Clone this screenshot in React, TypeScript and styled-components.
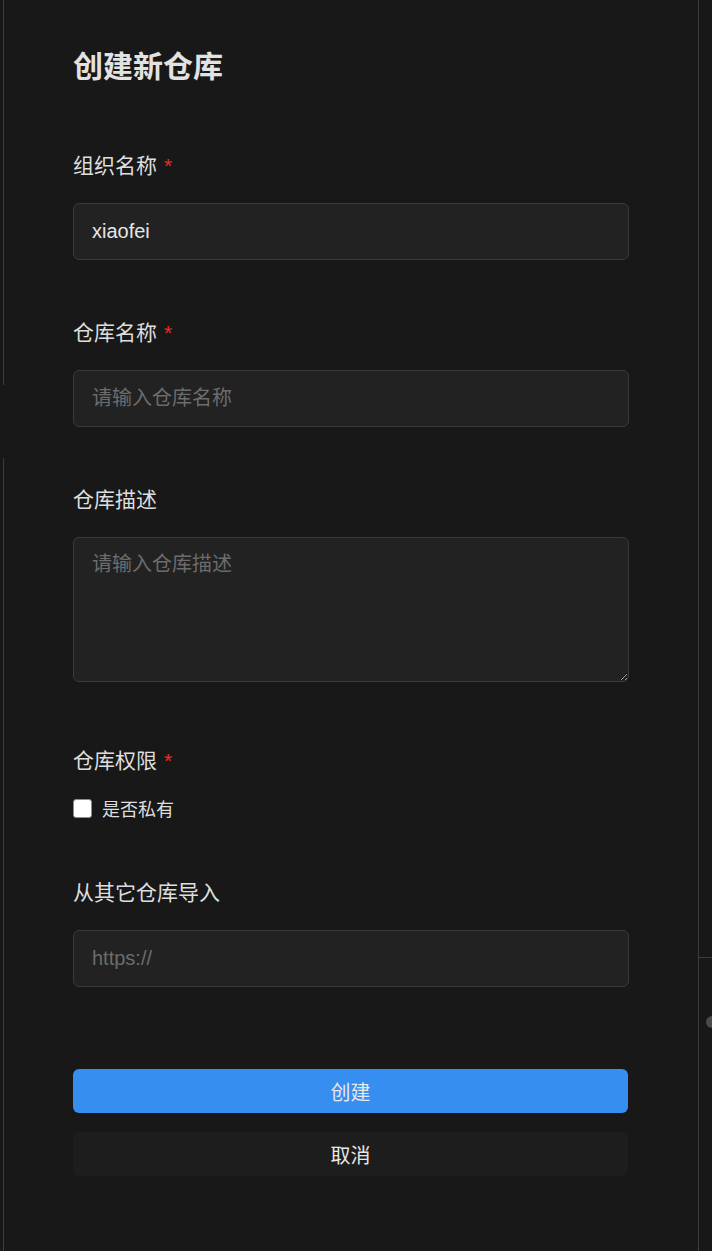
import styled, { createGlobalStyle } from 'styled-components';

const GlobalStyle = createGlobalStyle`
  html, body {
    margin: 0;
    background: #181818;
  }
  * {
    box-sizing: border-box;
  }
`;

const Shell = styled.div`
  position: relative;
  display: flex;
  min-height: 1251px;
  font-family: 'Liberation Sans', 'Noto Sans CJK SC', sans-serif;
  color: #dedede;
`;

const LeftGutter = styled.div`
  width: 3px;
  flex-shrink: 0;
`;

const GutterGap = styled.div`
  position: absolute;
  left: 0;
  top: 385px;
  width: 8px;
  height: 73px;
  background: #181818;
`;

const Panel = styled.main`
  width: 696px;
  flex-shrink: 0;
  border-left: 1px solid #3c3c3c;
  border-right: 1px solid #3c3c3c;
  padding: 47px 0 0 69px;
`;

const RightRail = styled.aside`
  flex: 1;
  min-width: 0;
  overflow: hidden;
  display: flex;
  flex-direction: column;
`;

const RailTop = styled.div`
  height: 958px;
  border-bottom: 1px solid #3c3c3c;
`;

const RailKnob = styled.div`
  width: 12px;
  height: 12px;
  flex-shrink: 0;
  margin: 58px 0 0 7px;
  border-radius: 50%;
  background: #4a4a4a;
`;

const Form = styled.form`
  width: 556px;
  display: flex;
  flex-direction: column;
`;

const Title = styled.h1`
  margin: 0 0 65px;
  font-size: 30px;
  line-height: 40px;
  font-weight: 700;
  color: #e2e2e2;
`;

const Field = styled.div<{ $gap?: number }>`
  display: flex;
  flex-direction: column;
  margin-bottom: ${(p) => p.$gap ?? 59}px;
`;

const Label = styled.label`
  font-size: 21px;
  line-height: 28px;
  margin-bottom: 23px;
`;

const Required = styled.span`
  color: #e5302d;
  margin-left: 7px;
`;

const TextInput = styled.input`
  height: 57px;
  padding: 0 18px;
  border: 1px solid #3a3a3a;
  border-radius: 6px;
  background: #222222;
  color: #e6e6e6;
  font-family: inherit;
  font-size: 20px;
  outline: none;

  &::placeholder {
    color: #6c6c6c;
  }
`;

const TextArea = styled.textarea`
  display: block;
  height: 145px;
  padding: 12px 18px;
  border: 1px solid #3a3a3a;
  border-radius: 6px;
  background: #222222;
  color: #e6e6e6;
  font-family: inherit;
  font-size: 20px;
  line-height: 28px;
  outline: none;
  resize: vertical;

  &::placeholder {
    color: #6c6c6c;
  }
`;

const CheckRow = styled.label`
  display: flex;
  align-items: center;
  gap: 10px;
  height: 28px;
  margin-top: -4px;
  font-size: 18px;
`;

const Check = styled.input`
  appearance: none;
  width: 19px;
  height: 19px;
  margin: 0;
  border: 1px solid #8c8c8c;
  border-radius: 3px;
  background: #ffffff;
`;

const Button = styled.button<{ $primary?: boolean }>`
  height: 44px;
  width: 555px;
  border: none;
  border-radius: 6px;
  background: ${(p) => (p.$primary ? '#368ef0' : '#1d1d1d')};
  color: #e8e8e8;
  font-family: inherit;
  font-size: 20px;
  margin-bottom: ${(p) => (p.$primary ? 19 : 0)}px;
`;

const App = () => {
  return (
    <>
      <GlobalStyle />
      <Shell>
        <LeftGutter />
        <GutterGap />
        <Panel>
          <Form onSubmit={(e) => e.preventDefault()}>
            <Title>创建新仓库</Title>
            <Field>
              <Label>
                组织名称<Required>*</Required>
              </Label>
              <TextInput defaultValue='xiaofei' />
            </Field>
            <Field>
              <Label>
                仓库名称<Required>*</Required>
              </Label>
              <TextInput placeholder='请输入仓库名称' />
            </Field>
            <Field $gap={65}>
              <Label>仓库描述</Label>
              <TextArea placeholder='请输入仓库描述' />
            </Field>
            <Field $gap={57}>
              <Label>
                仓库权限<Required>*</Required>
              </Label>
              <CheckRow>
                <Check type='checkbox' />
                是否私有
              </CheckRow>
            </Field>
            <Field $gap={82}>
              <Label>从其它仓库导入</Label>
              <TextInput placeholder='https://' />
            </Field>
            <Button $primary type='submit'>
              创建
            </Button>
            <Button type='button'>取消</Button>
          </Form>
        </Panel>
        <RightRail>
          <RailTop />
          <RailKnob />
        </RightRail>
      </Shell>
    </>
  );
};

export default App;
